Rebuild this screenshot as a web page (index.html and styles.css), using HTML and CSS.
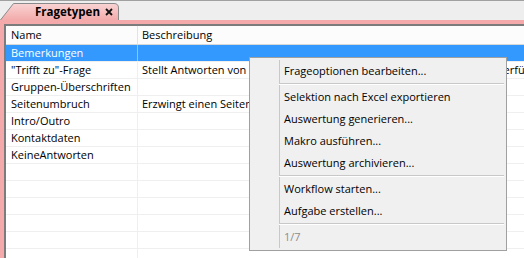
FILE: index.html
```html
<!DOCTYPE html>
<html lang="de">
<head>
<meta charset="utf-8">
<title>Fragetypen</title>
<link rel="stylesheet" href="styles.css">
</head>
<body>
<div class="app">
  <div class="tabstrip">
    <div class="tab">
      <svg class="tab-shape" viewBox="0 0 119 17" width="119" height="17">
        <defs>
          <linearGradient id="tabfill" x1="0" y1="0" x2="0" y2="1">
            <stop offset="0" stop-color="#f9d4d4"/>
            <stop offset="1" stop-color="#f3a9a9"/>
          </linearGradient>
        </defs>
        <path d="M0,17.5 L13.5,0.5 H114 Q118.5,0.5 118.5,5 V17.5 Z" fill="url(#tabfill)"/>
        <path d="M0.5,17 L13.5,0.5 H114 Q118.5,0.5 118.5,5 V17" fill="none" stroke="#8a8a8a" stroke-width="1"/>
      </svg>
      <span class="tab-title">Fragetypen</span>
      <svg class="tab-close" viewBox="0 0 8 8" width="8" height="8">
        <path d="M1,1 L7,7 M7,1 L1,7" stroke="#111" stroke-width="1.8" fill="none"/>
      </svg>
    </div>
  </div>
  <div class="frame">
    <div class="grid">
      <div class="row head"><div class="cell">Name</div><div class="cell">Beschreibung</div><div class="cell"></div></div>
      <div class="row selected"><div class="cell">Bemerkungen</div><div class="cell"></div><div class="cell"></div></div>
      <div class="row"><div class="cell">"Trifft zu"-Frage</div><div class="cell">Stellt Antworten von "Trifft voll zu" bis "Trifft überhaupt nicht zu"&nbsp; zur Verfügung</div><div class="cell"></div></div>
      <div class="row"><div class="cell">Gruppen-Überschriften</div><div class="cell"></div><div class="cell"></div></div>
      <div class="row"><div class="cell">Seitenumbruch</div><div class="cell">Erzwingt einen Seitenumbruch</div><div class="cell"></div></div>
      <div class="row"><div class="cell">Intro/Outro</div><div class="cell"></div><div class="cell"></div></div>
      <div class="row"><div class="cell">Kontaktdaten</div><div class="cell"></div><div class="cell"></div></div>
      <div class="row"><div class="cell">KeineAntworten</div><div class="cell"></div><div class="cell"></div></div>
      <div class="row"><div class="cell"></div><div class="cell"></div><div class="cell"></div></div>
      <div class="row"><div class="cell"></div><div class="cell"></div><div class="cell"></div></div>
      <div class="row"><div class="cell"></div><div class="cell"></div><div class="cell"></div></div>
      <div class="row"><div class="cell"></div><div class="cell"></div><div class="cell"></div></div>
      <div class="row"><div class="cell"></div><div class="cell"></div><div class="cell"></div></div>
      <div class="row"><div class="cell"></div><div class="cell"></div><div class="cell"></div></div>
    </div>
  </div>
  <div class="menu">
    <div class="gutter"></div>
    <div class="items">
      <div class="item">Frageoptionen bearbeiten...</div>
      <div class="sep"></div>
      <div class="item">Selektion nach Excel exportieren</div>
      <div class="item">Auswertung generieren...</div>
      <div class="item">Makro ausführen...</div>
      <div class="item">Auswertung archivieren...</div>
      <div class="sep"></div>
      <div class="item">Workflow starten...</div>
      <div class="item">Aufgabe erstellen...</div>
      <div class="sep"></div>
      <div class="item disabled">1/7</div>
    </div>
  </div>
</div>
</body>
</html>
```

FILE: styles.css
```css
* {
  box-sizing: border-box;
  margin: 0;
  padding: 0;
}

html, body {
  width: 524px;
  height: 258px;
  overflow: hidden;
  background: #ffffff;
}

body {
  font-family: "Open Sans", "Noto Sans", sans-serif;
  font-size: 11px;
  color: #000000;
}

.app {
  position: relative;
  width: 524px;
  height: 258px;
  display: flex;
  flex-direction: column;
}

/* ---------- tab strip ---------- */
.tabstrip {
  height: 20px;
  flex: none;
  background: #eeeeee;
  border-top: 1px solid #a0a0a0;
  display: flex;
  align-items: flex-end;
}

.tab {
  position: relative;
  width: 119px;
  height: 17px;
  display: flex;
  align-items: center;
}

.tab-shape {
  position: absolute;
  left: 0;
  top: 0;
  display: block;
}

.tab-title {
  position: relative;
  margin-left: 35px;
  font-weight: 700;
  font-size: 11.5px;
  line-height: 17px;
  color: #000;
}

.tab-close {
  position: relative;
  display: block;
  margin-left: auto;
  margin-right: 6px;
  margin-top: 1px;
}

/* ---------- frame + grid ---------- */
.frame {
  flex: 1;
  display: flex;
  background: #f4aaaa;
  padding: 4px 0 0 4px;
  min-height: 0;
}

.grid {
  flex: 1;
  background: #ffffff;
  border-top: 2px solid #7c7c7c;
  border-left: 2px solid #7c7c7c;
  overflow: hidden;
}

.row {
  display: grid;
  grid-template-columns: 132px 386px 1fr;
  height: 17px;
  border-bottom: 1px solid #efefef;
}

.cell {
  line-height: 16px;
  white-space: nowrap;
  overflow: hidden;
  padding-left: 5px;
}

.cell:first-child {
  border-right: 1px solid #efefef;
}

.cell + .cell {
  padding-left: 4px;
}

.row.head {
  height: 19px;
  background: #fcfcfc;
  border-bottom: 1px solid #d8d8d8;
}

.row.head .cell {
  line-height: 18px;
}

.row.head .cell:first-child {
  border-right-color: #e3e3e3;
}

.row.selected {
  background: #3399ff;
  color: #ffffff;
}

.row.selected .cell:first-child {
  border-right-color: #8cc4ff;
}

/* ---------- context menu ---------- */
.menu {
  position: absolute;
  left: 249px;
  top: 57px;
  width: 258px;
  height: 194px;
  background: #f0f0f0;
  border: 1px solid #a0a0a0;
  padding: 2px;
  display: flex;
}

.gutter {
  width: 28px;
  flex: none;
  border-right: 1px solid #c8c8c8;
}

.items {
  flex: 1;
  display: flex;
  flex-direction: column;
}

.item {
  height: 22px;
  line-height: 22px;
  padding-left: 4px;
  white-space: nowrap;
  color: #000;
}

.item.disabled {
  color: #8d8d8d;
}

.sep {
  height: 1px;
  margin: 1px 0 2px -1px;
  background: #c8c8c8;
  box-shadow: 0 1px 0 #ffffff;
}
```
